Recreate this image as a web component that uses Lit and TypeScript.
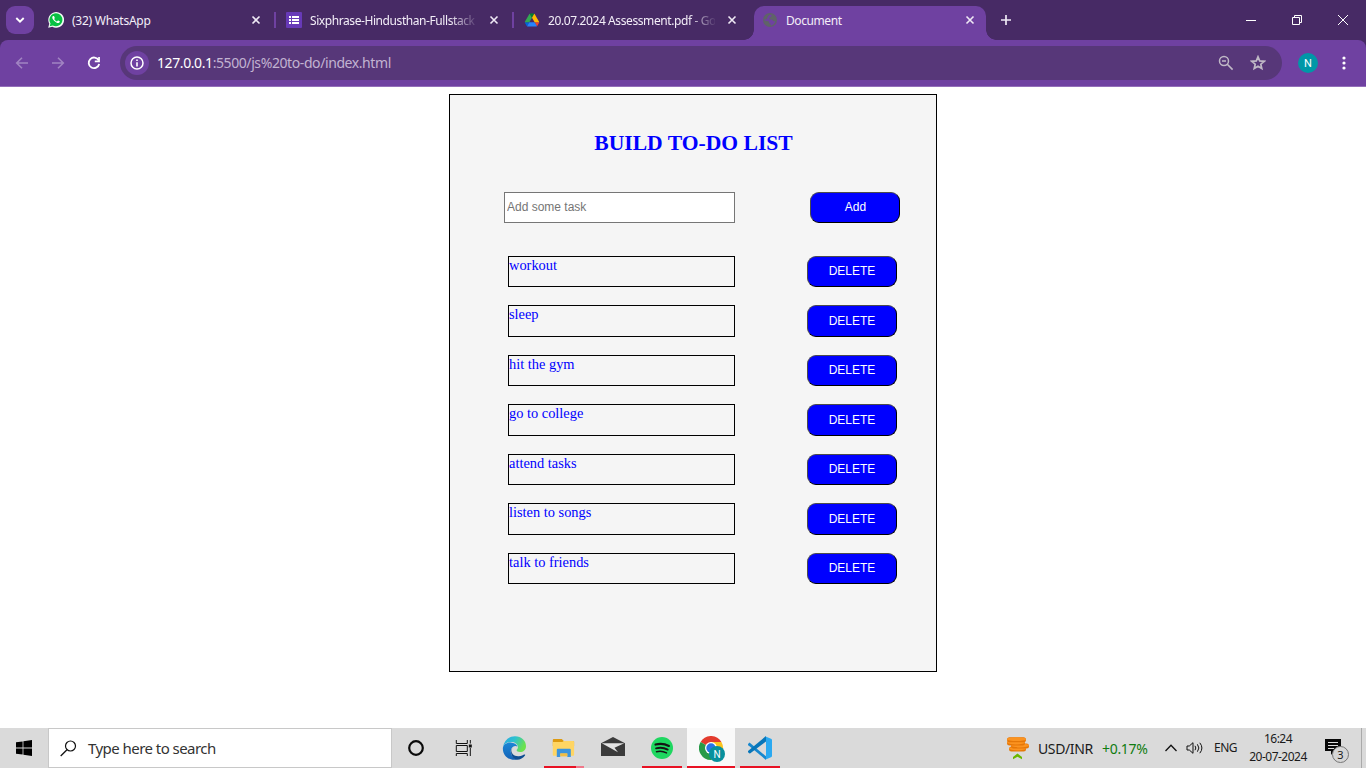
import { LitElement, html, css, svg } from "lit";
import { customElement, property, state } from "lit/decorators.js";
import { classMap } from "lit/directives/class-map.js";

const closeIcon = html`<svg width="10" height="10" viewBox="0 0 10 10"><path d="M1.500 1.500 8.500 8.500M8.500 1.500 1.500 8.500" stroke="#efe9f5" stroke-width="1.600" fill="none"/></svg>`;

const whatsapp = html`<svg width="16" height="16" viewBox="0 0 16 16">
  <path d="M0.2 15.8 1.3 11.8A7.9 7.9 0 1 1 4.3 14.8Z" fill="#f4fbf6"/>
  <path d="M1.7 14.3 2.5 11.4A6.5 6.5 0 1 1 4.8 13.5Z" fill="#08c143"/>
  <path d="M5.3 3.9c-.3 0-.9.4-1 1.3-.1 1.2.7 2.400 2.100 3.800 1.500 1.400 2.900 2.200 4.100 2 .9-.2 1.400-.8 1.400-1.400 0-.4-1.700-1.200-2-1.100-.3.100-.6.9-.9.900-.8-.2-2.500-1.700-2.800-2.500 0-.3.600-.7.600-1-.1-.5-.7-2-1.100-2Z" fill="#fff"/></svg>`;
const forms = html`<svg width="16" height="16" viewBox="0 0 16 16"><rect width="16" height="16" rx="1" fill="#673ab7"/>
  <path d="M3 4h2v2H3zM6 4h7v2H6zM3 7h2v2H3zM6 7h7v2H6zM3 10h2v2H3zM6 10h7v2H6z" fill="#fff"/></svg>`;
const drive = html`<svg width="16" height="16" viewBox="-5 -5 97.3 88">
  <path d="m6.600 66.850 3.850 6.650c.8 1.400 1.950 2.500 3.300 3.300l13.750-23.800h-27.500c0 1.550.4 3.100 1.200 4.500z" fill="#0066da"/>
  <path d="m43.650 25-13.750-23.800c-1.350.8-2.500 1.900-3.300 3.300l-25.400 44a9.060 9.060 0 0 0-1.200 4.500h27.500z" fill="#34a853"/>
  <path d="m73.550 76.800c1.350-.8 2.500-1.900 3.300-3.300l1.600-2.750 7.650-13.250c.8-1.400 1.200-2.950 1.200-4.500h-27.502l5.852 11.500z" fill="#ea4335"/>
  <path d="m43.650 25 13.750-23.800c-1.350-.8-2.900-1.200-4.500-1.200h-18.500c-1.600 0-3.150.45-4.500 1.200z" fill="#00832d"/>
  <path d="m59.800 53h-32.300l-13.750 23.800c1.350.8 2.900 1.200 4.500 1.200h50.800c1.600 0 3.150-.45 4.500-1.200z" fill="#2684fc"/>
  <path d="m73.400 26.500-12.700-22c-.8-1.400-1.950-2.500-3.300-3.300l-13.750 23.800 16.150 28h27.450c0-1.550-.4-3.100-1.200-4.500z" fill="#ffba00"/></svg>`;
const globe = html`<svg width="16" height="16" viewBox="0 0 16 16"><circle cx="8" cy="8" r="7" fill="#5f6368"/>
  <path d="M7 3.200 9.600 2.500 9.200 4.700 7.200 5.700 7.400 7.500 10 7.500 11.200 9.300 13.300 9.300C12.800 11.700 10.500 13.700 8.600 13.500L8.700 11.700 7.100 11.200 6.900 9.400 2.500 8.500 2.600 7.300C3.500 7.400 4.800 7.600 5.100 6.700 5.100 5.500 6 4.700 7 3.200Z" fill="#6f41a1"/></svg>`;

@customElement("browser-tab")
class BrowserTab extends LitElement {
  @property() label = "";
  @property({ type: Boolean, reflect: true }) active = false;
  @property({ attribute: false }) icon: unknown;
  @property({ type: Boolean }) divider = false;
  static styles = css`
    :host { display: block; width: 238px; height: 40px; flex: none; padding-top: 6px; box-sizing: border-box; }
    .tab { position: relative; display: flex; align-items: center; height: 28px; padding-left: 10px; }
    .icon { width: 16px; height: 16px; display: flex; }
    .label { width: 167px; margin-left: 8px; padding-top: 2px; overflow: hidden; white-space: nowrap; color: #f3eef8;
      font: 12px/18px "Noto Sans", sans-serif; letter-spacing: var(--track, 0); }
    .fade { mask-image: linear-gradient(to right, #000 140px, transparent 169px); }
    .close { display: flex; margin-left: 12px; }
    .divider { width: 2px; height: 16px; margin-left: 13px; background: #6f41a1; }
    .active { width: 232px; height: 34px; margin-left: 2px; padding: 0 0 6px 8px; box-sizing: border-box; border-radius: 10px 10px 0 0; background: #6f41a1; }
    .active::before, .active::after { content: ""; position: absolute; bottom: 0; width: 10px; height: 10px; }
    .active::before { left: -10px; background: radial-gradient(circle at 0 0, transparent 9.500px, #6f41a1 10px); }
    .active::after { right: -10px; background: radial-gradient(circle at 100% 0, transparent 9.500px, #6f41a1 10px); }
  `;
  render() {
    return html`<div class=${classMap({ tab: true, active: this.active })}>
      <span class="icon">${this.icon}</span>
      <span class=${classMap({ label: true, fade: this.label.length > 20 })}>${this.label}</span>
      <span class="close">${closeIcon}</span>
      ${this.divider ? html`<span class="divider"></span>` : ""}
    </div>`;
  }
}

@customElement("browser-chrome")
class BrowserChrome extends LitElement {
  static styles = css`
    :host { display: block; height: 87px; background: #472a65; font-family: "Noto Sans", sans-serif; }
    svg { display: block; }
    .strip { display: flex; height: 40px; }
    .search { display: flex; align-items: center; justify-content: center; width: 28px; height: 28px; margin: 6px 4px 0 6px; border-radius: 9px; background: #6f41a1; }
    .t1 { --track: -0.250px; } .t2 { --track: -0.420px; } .t3 { --track: -0.400px; } .t4 { --track: -0.420px; }
    .plus { margin: 14px 0 0 10px; }
    .window { display: flex; gap: 34px; margin: 14px 17px 0 auto; }
    .bar { display: flex; align-items: center; height: 47px; box-sizing: border-box; padding-left: 14px; border-bottom: 1px solid #936fb9; border-radius: 8px 8px 0 0; background: #6f41a1; }
    .nav { display: flex; gap: 20px; margin-right: 18px; }
    .omni { display: flex; align-items: center; width: 1162px; height: 34px; border-radius: 17px; background: #573779; box-sizing: border-box; padding: 0 16px 0 5px; }
    .info { display: flex; align-items: center; justify-content: center; width: 24px; height: 24px; border-radius: 50%; background: #6f41a1; }
    .url { margin: 0 auto 0 8px; font-size: 14px; line-height: 20px; color: #c2b3d1; letter-spacing: -0.410px; white-space: nowrap; }
    .host { color: #fff; }
    .tools { display: flex; gap: 16px; }
    .avatar { width: 20px; height: 20px; margin: 0 18px 0 16px; border-radius: 50%; background: #0097a7; color: #fff; font: 11px/21px Roboto, sans-serif; text-align: center; }
  `;
  render() {
    return html`
      <div class="strip">
        <div class="search"><svg width="10" height="6" viewBox="0 0 10 6"><path d="M1.300 1 5 4.600 8.700 1" fill="none" stroke="#fff" stroke-width="1.900"/></svg></div>
        <browser-tab class="t1" label="(32) WhatsApp" .icon=${whatsapp} divider></browser-tab>
        <browser-tab class="t2" label="Sixphrase-Hindusthan-Fullstack" .icon=${forms} divider></browser-tab>
        <browser-tab class="t3" label="20.07.2024 Assessment.pdf - Go" .icon=${drive}></browser-tab>
        <browser-tab class="t4" label="Document" .icon=${globe} active></browser-tab>
        <svg class="plus" width="12" height="12" viewBox="0 0 12 12"><path d="M6 1v10M1 6h10" stroke="#efe9f5" stroke-width="1.700"/></svg>
        <div class="window">
          <svg width="12" height="12"><path d="M1 6.500h10" stroke="#fff"/></svg>
          <svg width="12" height="12" fill="none" stroke="#fff"><path d="M1.500 3.500h7v7h-7zM3.500 3.500v-2h7v7h-2"/></svg>
          <svg width="12" height="12"><path d="M1 1 11 11M11 1 1 11" stroke="#fff"/></svg>
        </div>
      </div>
      <div class="bar">
        <div class="nav">
          <svg width="16" height="16" viewBox="0 0 16 16"><path d="M14 8H3M8 2.700 2.700 8 8 13.300" fill="none" stroke="#a184c2" stroke-width="1.600"/></svg>
          <svg width="16" height="16" viewBox="0 0 16 16"><path d="M2 8H13M8 2.700 13.300 8 8 13.300" fill="none" stroke="#a184c2" stroke-width="1.600"/></svg>
          <svg width="16" height="16" viewBox="0 0 16 16"><path d="M12.700 5.300A5.300 5.300 0 1 0 13.200 9" fill="none" stroke="#fff" stroke-width="1.800"/><path d="M13.900 2v5.200H8.800V5.500h3.400V2z" fill="#fff"/></svg>
        </div>
        <div class="omni">
          <span class="info"><svg width="14" height="14" viewBox="0 0 14 14"><circle cx="7" cy="7" r="6" fill="none" stroke="#fff" stroke-width="1.500"/><path d="M6.200 3.500h1.600v1.600H6.200zM6.200 6.200h1.600v4.300H6.200z" fill="#fff"/></svg></span>
          <span class="url"><span class="host">127.0.0.1</span>:5500/js%20to-do/index.html</span>
          <span class="tools">
            <svg width="16" height="16" viewBox="0 0 16 16"><circle cx="6" cy="6" r="4.500" fill="none" stroke="#c0b9c6" stroke-width="1.500"/><path d="M4 6h4M9.300 9.300 14.600 14.600" stroke="#c0b9c6" stroke-width="1.600"/></svg>
            <svg width="16" height="16" viewBox="0 0 16 16"><path d="M8 1.800 9.700 5.900 14.200 6.300 10.800 9.200 11.800 13.600 8 11.300 4.200 13.600 5.200 9.200 1.800 6.300 6.300 5.900Z" fill="none" stroke="#c0b9c6" stroke-width="1.700"/></svg>
          </span>
        </div>
        <div class="avatar">N</div>
        <svg width="16" height="16" fill="#fff"><circle cx="8" cy="3" r="1.600"/><circle cx="8" cy="8" r="1.600"/><circle cx="8" cy="13" r="1.600"/></svg>
      </div>`;
  }
}

@customElement("todo-list")
class TodoList extends LitElement {
  @state() private tasks = ["workout", "sleep", "hit the gym", "go to college", "attend tasks", "listen to songs", "talk to friends"];
  static styles = css`
    :host { display: block; width: 488px; height: 578px; margin: 7px 0 0 449px; box-sizing: border-box; border: 1px solid #000; background: #f5f5f5; font-family: "Liberation Serif", serif; color: #00f; }
    h2 { margin: 36px 0 0; padding-left: 1px; font-size: 21.600px; line-height: 25px; text-align: center; }
    .entry { display: flex; justify-content: space-between; width: 396px; margin: 36px 0 32.700px 54px; }
    input { width: 231px; height: 31px; box-sizing: border-box; margin: 0; padding: 0 2px 2px; border: 1px solid #767676; border-radius: 0; background: #fff; font: 12px "Liberation Sans", sans-serif; }
    input::placeholder { color: #757575; }
    button { width: 90px; height: 31px; box-sizing: border-box; margin: 0; padding: 0 0 2px; border: 1px solid; border-color: #4c4c4c #000 #000 #4c4c4c; border-radius: 9px; background: #00f; color: #fff; font: 12px "Liberation Sans", sans-serif; }
    .entry button { padding-left: 1px; }
    .rows { display: grid; gap: 18px; margin-left: 58px; width: 389px; }
    .row { display: flex; justify-content: space-between; height: 31.500px; }
    .task { width: 227px; height: 31.500px; box-sizing: border-box; border: 1px solid #000; font-size: 14.400px; }
    .row button { height: 31.500px; padding-bottom: 1.500px; }
    .row:nth-child(even) button { padding-bottom: 0; }
  `;
  render() {
    return html`
      <h2>BUILD TO-DO LIST</h2>
      <div class="entry"><input placeholder="Add some task" /><button>Add</button></div>
      <div class="rows">
        ${this.tasks.map((task) => html`<div class="row"><div class="task">${task}</div>
          <button @click=${() => (this.tasks = this.tasks.filter((t) => t !== task))}>DELETE</button></div>`)}
      </div>`;
  }
}

const edge = html`<svg width="24" height="24" viewBox="-0.7 0 24 24">
  <defs><linearGradient id="ea" x1="0" y1="0" x2="1" y2=".4"><stop offset="0" stop-color="#2ba5e2"/><stop offset=".5" stop-color="#2dc1d0"/><stop offset="1" stop-color="#6be24d"/></linearGradient>
  <linearGradient id="eb" x1="0" y1="0" x2="0" y2="1"><stop offset="0" stop-color="#1b87d6"/><stop offset="1" stop-color="#1361b6"/></linearGradient></defs>
  <path d="M0.300 11C1.500 4 6.500.2 12.300.2 18.900.2 23.300 4.700 23.300 10.200c0 3.600-2.700 5.800-5.800 5.800-2.500 0-3.600-.9-3.600-1.700 0-.6 1.400-1.200 1.300-3.200C15 8 12 6 8.700 6 4.500 6 1.500 8 .3 11Z" fill="url(#ea)"/>
  <path d="M.2 11.800C.6 8.600 4.100 6.400 8 6.600c3.700.2 6 2 6.700 4-1.200-.9-3.300-.8-4.700.5-3.800 3.500-1.500 10.500 4 12.500C6.500 25.200-.4 19.500.2 11.800Z" fill="url(#eb)"/>
  <path d="M9.600 12.200C7 17 11.500 20.500 16 20.200c2.700-.1 4.600-1.500 5.800-1.700.7 0 .9.400.5 1-2 2.800-5.300 4.500-8.500 4.200C8.500 22 7 15.500 9.600 12.200Z" fill="#0e4d91"/></svg>`;
const explorer = html`<svg width="24" height="24" viewBox="0.7 0 24 24"><path d="M1.500 4q0-1 1-1h8l2 2H22q.8 0 .8.800V10H1.500z" fill="#dd9a10"/><path d="M1.500 6H11l1.500-1H22q.8 0 .8.800V19q0 .800-.8.800H2.300q-.8 0-.8-.8z" fill="#ffd563"/><path d="M5.500 21v-7.200q0-1 1-1h12q1 0 1 1V21H16v-3.600H9V21z" fill="#3c94dc"/><path d="M9 17.400h7v3H9z" fill="#f2bd43"/></svg>`;
const mail = html`<svg width="24" height="24" viewBox="0 0 24 24"><path d="M0 7.300 12 1l12 6.300V20H0Z" fill="#3b3b3b"/><path d="M.8 7.300h22.400L13.500 11.800l3.500 4.500Z" fill="#e4e4e4"/></svg>`;
const spotify = html`<svg width="24" height="24" viewBox="0 0 24 24"><circle cx="12" cy="12" r="11" fill="#1ed760"/><g fill="none" stroke="#141414" stroke-linecap="round"><path d="M5.500 8.600c4.500-1.300 9.400-.8 13.400 1.400" stroke-width="2.100"/><path d="M6 12.300c4-1 8.200-.6 11.700 1.300" stroke-width="1.800"/><path d="M6.500 15.700c3.400-.8 7-.4 10 1.200" stroke-width="1.500"/></g></svg>`;
const chrome = html`<svg width="30" height="26" viewBox="0 0 30 26">
  <path d="M12 12 1.600 6A12 12 0 0 1 22.400 6Z" fill="#e33b2e"/><path d="M12 12 1.600 6A12 12 0 0 0 12 24L17 15Z" fill="#289a48"/><path d="M12 12V6H22.400A12 12 0 0 1 12 24Z" fill="#fcc31e"/>
  <circle cx="12" cy="12" r="6" fill="#fff"/><circle cx="12" cy="12" r="4.700" fill="#2974e8"/>
  <circle cx="18" cy="18" r="8" fill="#08909d"/><text x="18" y="21.800" text-anchor="middle" font-family="Roboto, sans-serif" font-size="10" fill="#fff">N</text></svg>`;
const vscode = html`<svg width="24" height="24" viewBox="0 0 24 24"><path d="M1.500 6.500 18 20.300V24L.3 9.200Q-.4 8.500.3 7.700Z" fill="#1687ce"/><path d="M.3 14.800 18 0V5.500L2 17.500Q1.500 17.800.3 16.500-.4 15.500.3 14.800Z" fill="#0876b9"/><path d="M17 .2 23 2.700q1 .4 1 1.500v15.600q0 1.100-1 1.500L17 23.800q1-.5 1-1.500V1.800Q18 .7 17 .2Z" fill="#2aa9f1"/></svg>`;
const taskview = html`<svg width="24" height="24" viewBox="1.2 0 24 24" fill="none" stroke="#111"><path d="M4.500 4v3.500h11V4M4.500 9.500h11v6h-11zM4.500 20v-2.500h11V20M18.500 4v3.500M18.500 12v8"/><path d="M17 8.500h3v3h-3z" fill="#111" stroke="none"/></svg>`;
const cortana = html`<svg width="24" height="24" viewBox="0 0 24 24"><circle cx="12" cy="12" r="6.800" fill="none" stroke="#0a0a0a" stroke-width="2.200"/></svg>`;
const coins = html`<svg width="24" height="24" viewBox="0 0 24 24">
  ${[{ x: 3, y: 10.5, w: 17 }, { x: 5, y: 7.5, w: 18 }, { x: 1, y: 4.5, w: 18 }, { x: 1, y: 1.2, w: 19 }].map(
    (c) => svg`<rect x=${c.x} y=${c.y} width=${c.w} height="5" rx="2.500" fill="#e57708"/><ellipse cx=${c.x + c.w / 2} cy=${c.y + 2} rx=${c.w / 2} ry="1.900" fill="#fb9320"/>`
  )}
  <path d="M7 23.300V21L11.500 17.500l4.500 3.500v2.300l-4.500-2.600Z" fill="#6bb700"/></svg>`;

@customElement("task-bar")
class TaskBar extends LitElement {
  static styles = css`
    :host { display: flex; height: 40px; background: #dadada; color: #1b1b1b; font-family: "Noto Sans", sans-serif; overflow: hidden; }
    svg { display: block; flex: none; }
    .start { display: flex; align-items: center; justify-content: center; width: 48px; }
    .search { display: flex; align-items: center; width: 344px; box-sizing: border-box; padding-left: 11px; border: 1px solid #c8c8c8; background: #fff; font-size: 15px; letter-spacing: -0.550px; color: #333; }
    .search span { margin-left: 11px; line-height: 20px; }
    .apps { display: flex; gap: 1.200px; }
    .app { position: relative; display: flex; align-items: center; justify-content: center; width: 48px; height: 40px; }
    .running::after { content: ""; position: absolute; left: 4px; width: 40px; bottom: 0; height: 2px; background: #e81123; }
    .grouped::after { background: linear-gradient(to right, #e81123 32px, #f0788a 32px); }
    .current { background: #f9f9f9; }
    .current::after { left: 0; width: 48px; }
    .current svg { margin: 2px 0 0 6px; }
    .tray { display: flex; align-items: center; margin-left: auto; white-space: nowrap; }
    .pair { width: 64px; margin-left: 8px; font-size: 14px; letter-spacing: -0.370px; }
    .gain { width: 63px; color: #107c10; font-size: 14px; letter-spacing: -0.300px; }
    .lang { width: 36px; margin-left: 10px; font-size: 12px; letter-spacing: -0.500px; padding-bottom: 2px; }
    .clock { width: 58px; margin-left: -1px; text-align: center; font-size: 12px; line-height: 18px; letter-spacing: -0.500px; }
    .note { position: relative; width: 24px; height: 18px; margin-left: 18px; }
    .count { position: absolute; left: 7px; top: 7px; width: 15px; height: 15px; border: 1px solid #777; border-radius: 50%; background: #d6d6d6; font-size: 11px; line-height: 15px; text-align: center; }
    .edge { width: 5px; height: 40px; margin-left: 12px; border-left: 1px solid #aaa; box-sizing: border-box; }
  `;
  render() {
    const apps = [
      { icon: cortana }, { icon: taskview }, { icon: edge }, { icon: explorer, kind: "running grouped" }, { icon: mail },
      { icon: spotify, kind: "running" }, { icon: chrome, kind: "running current" }, { icon: vscode, kind: "running" },
    ];
    return html`
      <div class="start"><svg width="16" height="16" viewBox="0 0 16 16"><path d="M0 2.300 6.600 1.400V7.600H0ZM7.400 1.300 16 0V7.600H7.400ZM0 8.400H6.600V14.600L0 13.700ZM7.400 8.400H16V16L7.400 14.700Z"/></svg></div>
      <div class="search"><svg width="17" height="17" viewBox="0 0 17 17"><circle cx="10.500" cy="6" r="5" fill="none" stroke="#111" stroke-width="1.200"/><path d="M7 9.700.7 16" stroke="#111" stroke-width="1.300"/></svg><span>Type here to search</span></div>
      <div class="apps">${apps.map((a) => html`<div class="app ${a.kind ?? ""}">${a.icon}</div>`)}</div>
      <div class="tray">
        ${coins}<span class="pair">USD/INR</span><span class="gain">+0.17%</span>
        <svg width="12" height="8" viewBox="0 0 12 8"><path d="M.5 7 6 1.200 11.500 7" fill="none" stroke="#111" stroke-width="1.300"/></svg>
        <svg width="27" height="16" viewBox="-9 0 27 16" fill="none" stroke="#111"><path d="M1 6h2.300L7 2.700v10.600L3.300 10H1zM9 5.800q1.700 2.200 0 4.400M11.400 4.300q3 3.700 0 7.400M13.800 2.800q4.200 5.200 0 10.400"/></svg>
        <span class="lang">ENG</span>
        <div class="clock">16:24<br />20-07-2024</div>
        <div class="note"><svg width="17" height="17" viewBox="0 0 17 17"><path d="M0 0h16v12H9l-3 4v-4H0z" fill="#080808"/><path d="M3 3.500h10M3 6.500h10M3 9.500h6" stroke="#ddd"/></svg><span class="count">3</span></div>
        <div class="edge"></div>
      </div>`;
  }
}

@customElement("app-root")
class AppRoot extends LitElement {
  static styles = css`
    :host { display: flex; flex-direction: column; width: 1366px; height: 768px; overflow: hidden; background: #fff; }
    main { flex: 1; min-height: 0; }
  `;
  render() {
    return html`<browser-chrome></browser-chrome><main><todo-list></todo-list></main><task-bar></task-bar>`;
  }
}
